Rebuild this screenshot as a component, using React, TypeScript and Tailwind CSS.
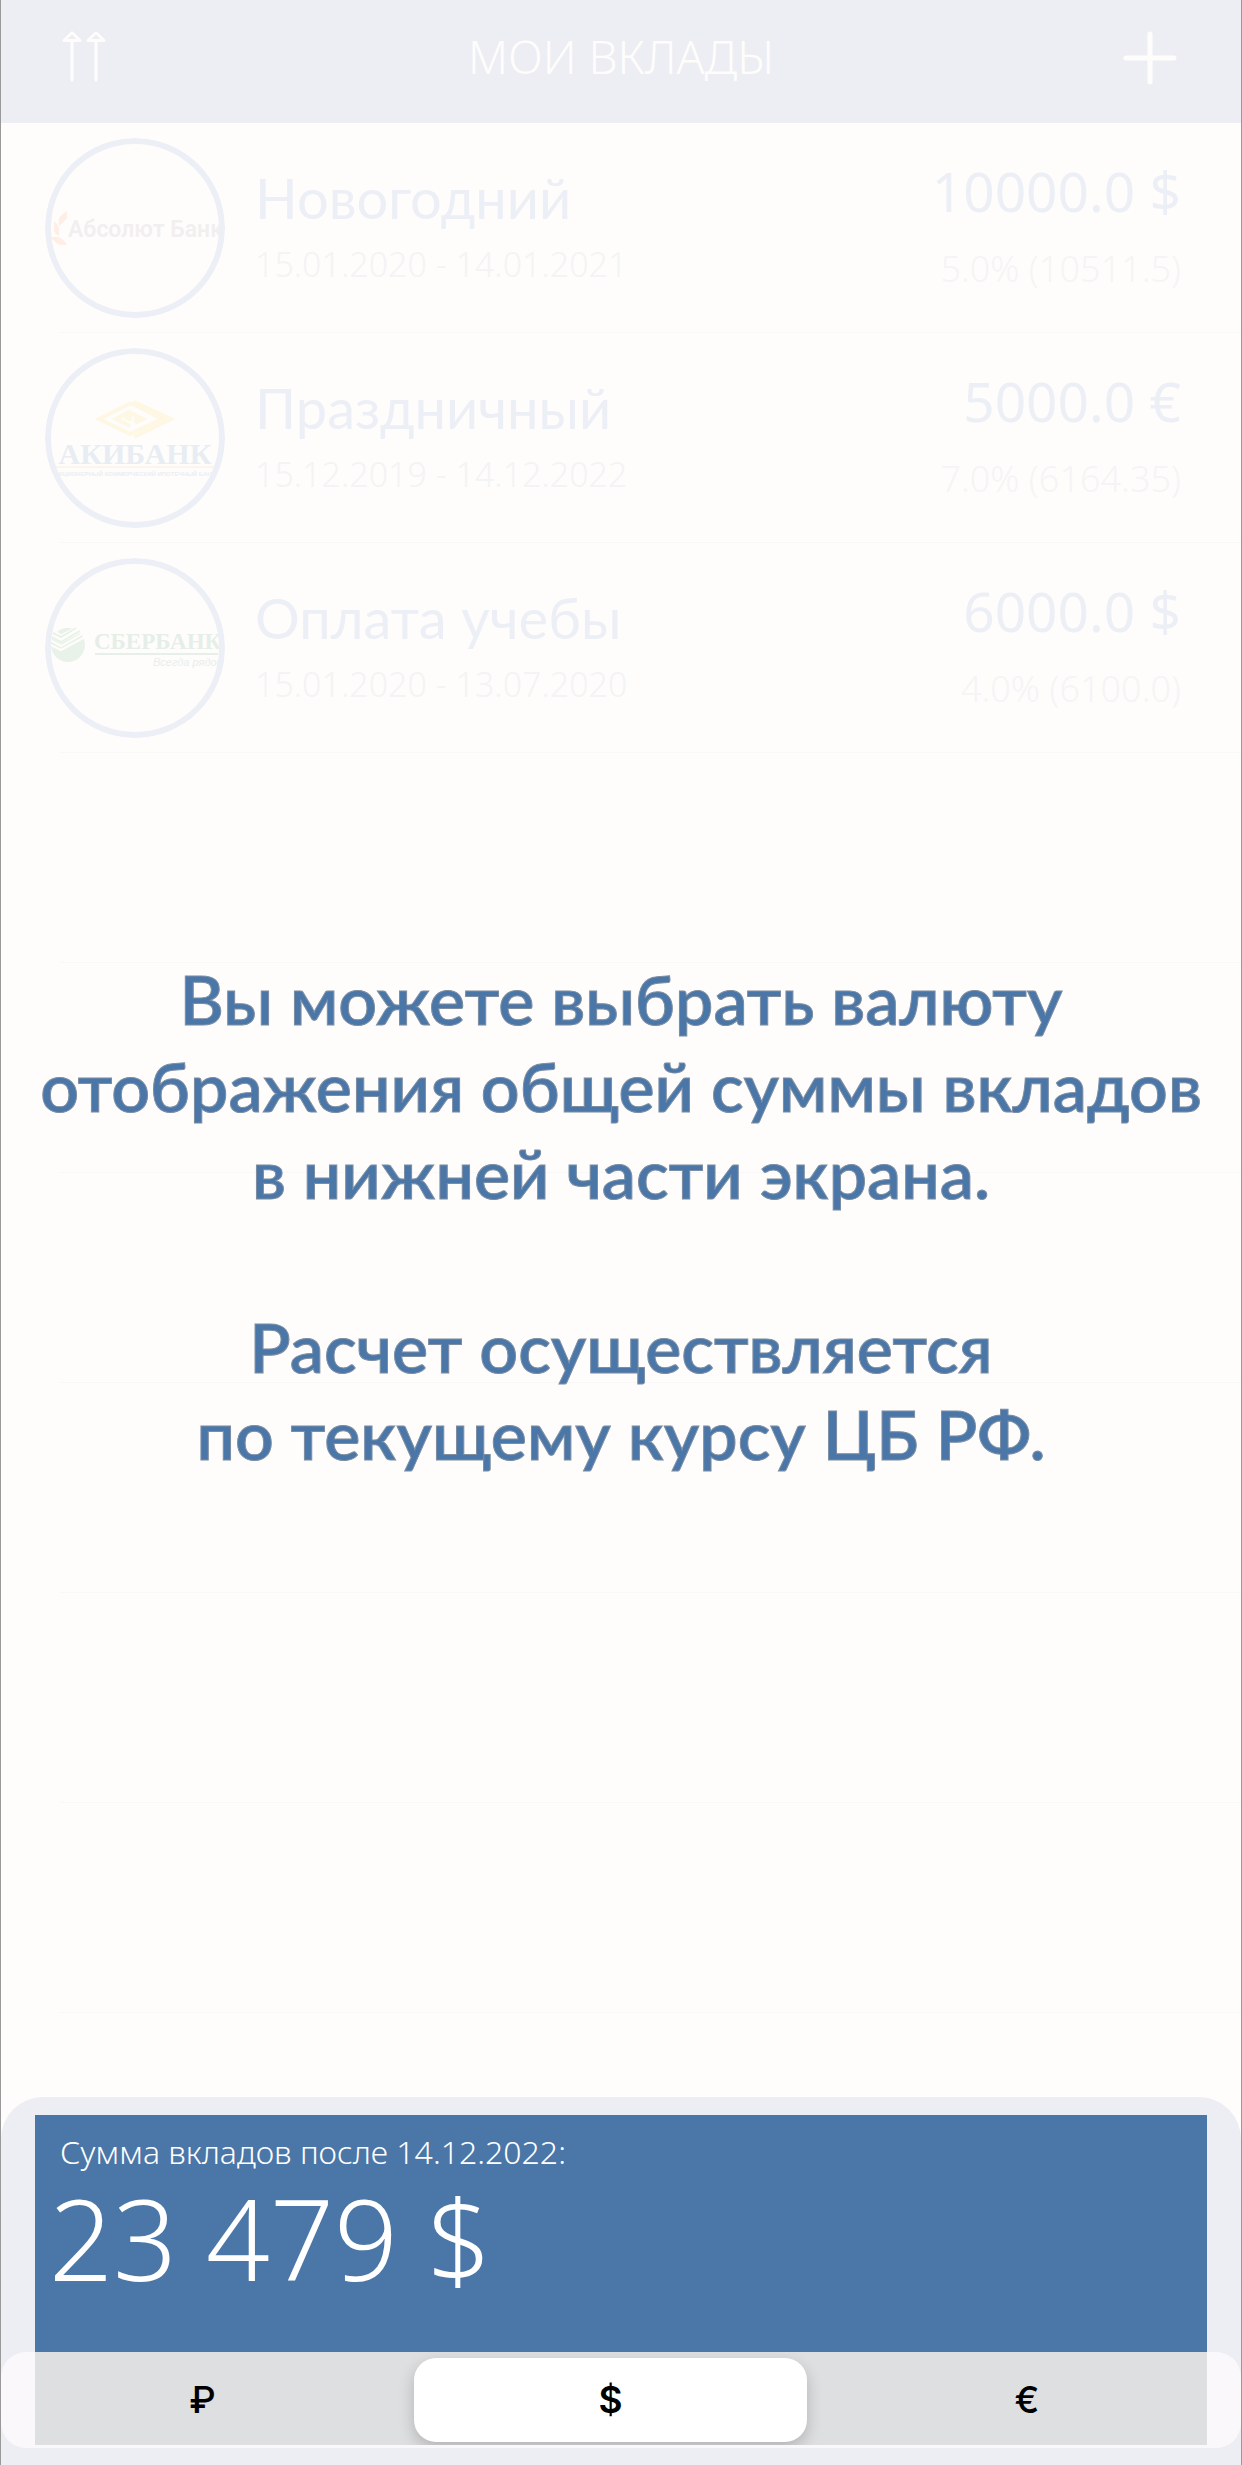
import { useState, type ReactNode } from "react";

type Deposit = {
  name: string;
  period: string;
  amount: string;
  yieldText: string;
  logo: ReactNode;
};

const AbsolutLogo = () => (
  <>
    <g fill="#feeee5">
      <path d="M22 73V80Q19 84 14 88Q13 84 14 80Q17 76 22 73Z" />
      <path d="M9 83Q13 86 14 90V98Q9 96 9 91Z" />
      <path d="M6 99H14Q19 102 22 107H15Q9 104 6 99Z" />
    </g>
    <text x="23" y="99" fontSize="23" fontWeight="600" fontFamily="Roboto, sans-serif" fill="#f2eff1">
      Абсолют Банк
    </text>
  </>
);

const AkibankLogo = () => (
  <>
    <g fill="none" stroke="#fdf7e3" strokeWidth="4">
      <path d="M86 55L54 71L85 86L117 71L86 55" />
      <path d="M89 54L126 71L89 89" />
      <path d="M85 78L71 71L84 64L98 71L90 75" />
      <path d="M80 71L85 67V73M90 68L94 71L89 73" />
    </g>
    <text x="90" y="116" fontSize="30" fontWeight="700" textAnchor="middle" fontFamily="Liberation Serif, serif" fill="#e7edf3">
      АКИБАНК
    </text>
    <path d="M8 119H172" stroke="#fdf5e9" strokeWidth="2" />
    <text x="90" y="128" fontSize="6" fontWeight="700" textAnchor="middle" fontFamily="Liberation Sans, sans-serif" fill="#ebeef2">
      АКЦИОНЕРНЫЙ КОММЕРЧЕСКИЙ ИПОТЕЧНЫЙ БАНК
    </text>
  </>
);

const SberbankLogo = () => (
  <>
    <circle cx="23" cy="87" r="17" fill="#e9f2e8" />
    <g fill="none" stroke="#fefdfb" strokeWidth="2">
      <path d="M3 73L16 81L38 69" strokeWidth="8" />
      <path d="M5 82L16 88L39 75" />
      <path d="M4 86L16 92L40 79" />
    </g>
    <g fill="none" stroke="#e9f2e8" strokeWidth="2">
      <path d="M8 75L16 79L31 70" />
      <path d="M7 79L16 84L35 73" />
    </g>
    <text x="49" y="91" fontSize="23" fontWeight="700" fontFamily="Liberation Serif, serif" fill="#e6eee8">
      СБЕРБАНК
    </text>
    <path d="M50 96H173" stroke="#e6f0e8" strokeWidth="2" />
    <text x="108" y="108" fontSize="11" fontStyle="italic" fontFamily="Liberation Sans, sans-serif" fill="#e9eeeb">
      Всегда рядом
    </text>
  </>
);

const deposits: Deposit[] = [
  { name: "Новогодний", period: "15.01.2020 - 14.01.2021", amount: "10000.0 $", yieldText: "5.0% (10511.5)", logo: <AbsolutLogo /> },
  { name: "Праздничный", period: "15.12.2019 - 14.12.2022", amount: "5000.0 €", yieldText: "7.0% (6164.35)", logo: <AkibankLogo /> },
  { name: "Оплата учебы", period: "15.01.2020 - 13.07.2020", amount: "6000.0 $", yieldText: "4.0% (6100.0)", logo: <SberbankLogo /> },
];

const emptyRows = [0, 1, 2, 3, 4, 5];

function DepositRow({ deposit }: { deposit: Deposit }) {
  return (
    <li>
      <div className="flex h-[209px] items-start pr-[60px] pl-11">
        <svg viewBox="0 0 180 180" className="mt-[15px] size-[180px] shrink-0 overflow-hidden rounded-full" role="img" aria-label="Логотип банка">
          {deposit.logo}
          <circle cx="90" cy="90" r="87" fill="none" stroke="#edeff6" strokeWidth="6" />
        </svg>
        <div className="mt-[45px] ml-[30px] grow">
          <h2 className="font-[Lato,sans-serif] text-[56px] leading-[60px] text-[#edeff6]">{deposit.name}</h2>
          <p className="mt-4 text-[34px] leading-10 font-light text-[#f4f3f5]">{deposit.period}</p>
        </div>
        <div className="mt-[38px] text-right">
          <p className="text-[55px] leading-[60px] text-[#edeff6]">{deposit.amount}</p>
          <p className="mt-7 text-[36px] leading-10 font-light text-[#f6f4f6]">{deposit.yieldText}</p>
        </div>
      </div>
      <div className="ml-[59px] h-px bg-[#f8f8f9]" />
    </li>
  );
}

const currencies = [
  { sign: "₽", label: "Рубли", place: "pr-11" },
  { sign: "$", label: "Доллары", place: "" },
  { sign: "€", label: "Евро", place: "pl-10" },
];

export default function App() {
  const [currency, setCurrency] = useState("$");

  return (
    <div className="relative flex min-h-screen flex-col border-x border-[#999999] bg-[#fefdfb] font-['Noto_Sans',sans-serif]">
      <header className="grid h-[123px] grid-cols-[1fr_auto_1fr] items-center bg-[#edeef4] px-[60px] pb-3 text-[#fefdfb]">
        <button type="button" aria-label="Сортировка" className="justify-self-start">
          <svg viewBox="0 0 46 52" className="h-[52px] w-[46px]" fill="none" stroke="currentColor" strokeWidth="3" strokeLinecap="round" strokeLinejoin="round">
            <path d="M11 11V50M3 10.500H19L12 3.500Q11 2.500 10 3.500Z" />
            <path d="M35 11V50M27 10.500H43L36 3.500Q35 2.500 34 3.500Z" />
          </svg>
        </button>
        <h1 className="text-[46px] leading-[48px] font-light">МОИ ВКЛАДЫ</h1>
        <button type="button" aria-label="Добавить вклад" className="justify-self-end pt-1 pr-1">
          <svg viewBox="0 0 54 54" className="size-[54px]" stroke="currentColor" strokeWidth="5" strokeLinecap="round">
            <path d="M27 3V51M3 27H51" />
          </svg>
        </button>
      </header>

      <main className="grow">
        <ul>
          {deposits.map((d) => (
            <DepositRow key={d.name} deposit={d} />
          ))}
        </ul>
        {emptyRows.map((row) => (
          <div key={row} className="pt-[209px]">
            <div className="ml-[59px] h-px bg-[#f9f8f8]" />
          </div>
        ))}
      </main>

      <footer className="rounded-t-[42px] bg-[#edeef4] pt-[18px] pb-[17px]">
        <section className="mx-[34px] h-[237px] bg-[#4a76a8] text-white">
          <p className="pt-[19px] pl-[25px] text-[32px] leading-9 font-light">Сумма вкладов после 14.12.2022:</p>
          <p className="mt-2 pl-3.5 text-[112px] leading-[120px] font-[350]">23 479 $</p>
        </section>
        <div className="rounded-[25px] bg-[#faf8fa] px-[34px] pb-[3px]">
          <div role="group" aria-label="Валюта" className="grid h-[93px] grid-cols-[379fr_393fr_400fr] overflow-hidden bg-[#dedfe1] pt-1.5 pb-[3px] font-[Inter,sans-serif] text-[37px] text-black">
            {currencies.map((c) => (
              <button
                key={c.sign}
                type="button"
                aria-label={c.label}
                aria-pressed={currency === c.sign}
                onClick={() => setCurrency(c.sign)}
                className={`${c.place} ${currency === c.sign ? "rounded-[22px] bg-white font-semibold shadow-[0_6px_16px_rgba(0,0,0,0.2)]" : "font-medium"}`}
              >
                {c.sign}
              </button>
            ))}
          </div>
        </div>
      </footer>

      <div className="pointer-events-none absolute inset-0 flex flex-col items-center justify-center pb-[34px] text-center font-[Lato,sans-serif] text-[68px] leading-[87px] font-semibold text-[#4a76a8] [-webkit-text-stroke:1px_#7d8ea3]">
        <p>
          Вы можете выбрать валюту
          <br />
          отображения общей суммы вкладов
          <br />в нижней части экрана.
        </p>
        <p className="mt-[87px]">
          Расчет осуществляется
          <br />
          по текущему курсу ЦБ РФ.
        </p>
      </div>
    </div>
  );
}
